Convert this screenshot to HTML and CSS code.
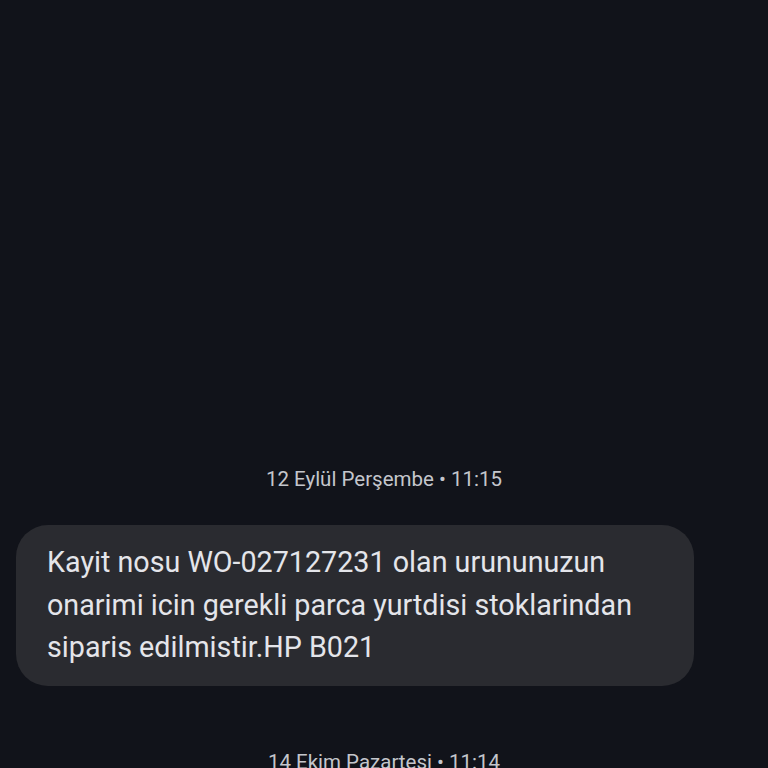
FILE: index.html
```html
<!DOCTYPE html>
<html lang="tr">
<head>
    <meta charset="UTF-8">
    <meta name="viewport" content="width=device-width, initial-scale=1.0">
    <title>Mesajlar</title>
    <link rel="stylesheet" href="styles.css">
</head>
<body>
    <div class="thread">
        <div class="date-label">12 Eylül Perşembe • 11:15</div>
        <div class="bubble">
            Kayit nosu WO-027127231 olan urununuzun onarimi icin gerekli parca yurtdisi stoklarindan siparis edilmistir.HP B021
        </div>
        <div class="date-label next">14 Ekim Pazartesi • 11:14</div>
    </div>
</body>
</html>
```

FILE: styles.css
```css
body {
    font-family: Roboto, "Noto Sans", sans-serif;
    margin: 0;
    height: 768px;
    overflow: hidden;
    background-color: #11131a;
}
.thread {
    display: flex;
    flex-direction: column;
    padding: 467px 16px 0 16px;
}
.date-label {
    text-align: center;
    font-size: 20.5px;
    line-height: 24px;
    color: #c4c6cc;
}
.date-label.next {
    margin-top: 64px;
}
.bubble {
    margin-top: 34px;
    width: 678px;
    box-sizing: border-box;
    padding: 16px 20px 17px 31px;
    background-color: #2a2b30;
    border-radius: 32px;
    color: #e4e5ea;
    font-size: 28.7px;
    line-height: 42.5px;
}
```
